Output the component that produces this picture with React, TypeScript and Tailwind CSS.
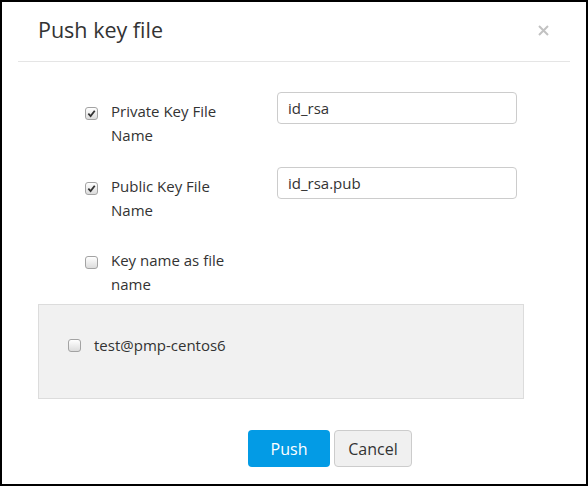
import React from "react";

function Check({ checked }: { checked?: boolean }) {
  return (
    <span className="flex h-[13px] w-[13px] shrink-0 items-center justify-center rounded-[3px] border border-[#a3a3a3] bg-gradient-to-b from-white to-[#dcdcdc]">
      {checked ? (
        <svg width="9" height="9" viewBox="0 0 10 10">
          <path d="M1.5 5.2 L4 7.8 L8.6 2" fill="none" stroke="#333" strokeWidth="2" />
        </svg>
      ) : null}
    </span>
  );
}

type RowProps = {
  label: string;
  checked?: boolean;
  value?: string;
  height: string;
};

function FieldRow({ label, checked, value, height }: RowProps) {
  return (
    <div className={`flex ${height}`}>
      <div className="flex w-[192px] items-start pt-[7px]">
        <span className="mt-[8px]">
          <Check checked={checked} />
        </span>
        <span className="ml-[13px] w-[140px] text-[15px] leading-6">{label}</span>
      </div>
      {value !== undefined ? (
        <input
          readOnly
          value={value}
          className="h-[32px] w-[240px] rounded-[4px] border border-[#cccccc] px-[10px] text-[15px] text-[#333] outline-none"
        />
      ) : null}
    </div>
  );
}

export default function App() {
  return (
    <div
      className="box-border h-[486px] w-[588px] border-2 border-black bg-white text-[#333]"
      style={{ fontFamily: '"Open Sans", "Noto Sans", sans-serif' }}
    >
      <div className="flex h-[59px] items-start justify-between pl-[36px] pr-[37px] pt-[14px]">
        <h1 className="text-[21.5px] leading-[28px] font-normal">Push key file</h1>
        <svg className="mt-[9px]" width="11" height="11" viewBox="0 0 11 11">
          <path d="M1 1 L10 10 M10 1 L1 10" stroke="#c2c2c2" strokeWidth="2" />
        </svg>
      </div>
      <div className="mx-[16px] h-px bg-[#e5e5e5]" />

      <div className="pl-[83px] pt-[30px]">
        <FieldRow label="Private Key File Name" checked value="id_rsa" height="h-[75px]" />
        <FieldRow label="Public Key File Name" checked value="id_rsa.pub" height="h-[74px]" />
        <FieldRow label="Key name as file name" height="h-[63px]" />
      </div>

      <div className="ml-[36px] h-[95px] w-[486px] border border-[#dcdcdc] bg-[#f1f1f1] pl-[29px] pt-[28px]">
        <div className="flex items-center">
          <Check />
          <span className="ml-[13px] text-[15px] leading-6">test@pmp-centos6</span>
        </div>
      </div>

      <div className="mt-[31px] flex gap-[4px] pl-[246px]">
        <button
          type="button"
          className="h-[37px] w-[82px] rounded-[4px] bg-[#039be5] text-[16px] text-white"
        >
          Push
        </button>
        <button
          type="button"
          className="h-[37px] w-[78px] rounded-[4px] border border-[#cccccc] bg-[#f0f0f0] text-[16px] text-[#333]"
        >
          Cancel
        </button>
      </div>
    </div>
  );
}
